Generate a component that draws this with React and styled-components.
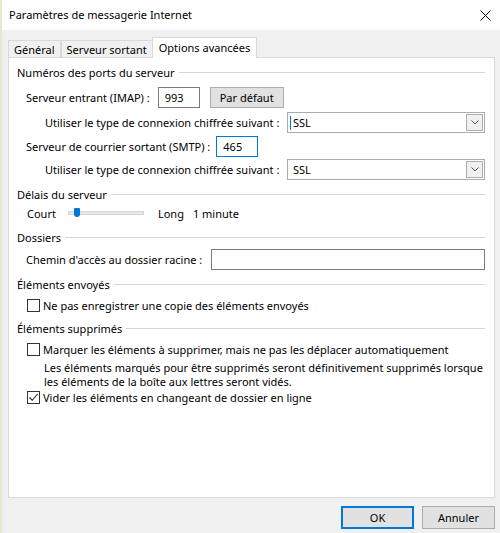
import React from 'react';
import styled, { createGlobalStyle } from 'styled-components';

const GlobalStyle = createGlobalStyle`
  html, body { margin: 0; padding: 0; background: #f0f0f0; }
  body { font-family: "Noto Sans", "Open Sans", sans-serif; font-size: 11px; color: #000; }
  * { box-sizing: border-box; }
`;

const App = () => {
  return (
    <>
      <GlobalStyle />
      <Window>
        <TitleBar>
          <Title>Paramètres de messagerie Internet</Title>
          <Close>
            <svg width="11" height="11" viewBox="0 0 11 11">
              <path d="M0.5 0.5 L10.5 10.5 M10.5 0.5 L0.5 10.5" stroke="#000" strokeWidth="1" fill="none" />
            </svg>
          </Close>
        </TitleBar>

        <Body>
          <Tabs>
            <Tab>Général</Tab>
            <Tab>Serveur sortant</Tab>
            <Tab $active>Options avancées</Tab>
          </Tabs>

          <Panel>
            <Section $mt={6}>Numéros des ports du serveur</Section>
            <Row $mt={7} $indent={9}>
              <Label>Serveur entrant (IMAP) :</Label>
              <TextBox $w={42} $ml={8}>993</TextBox>
              <Button $w={74} $ml={10}>Par défaut</Button>
            </Row>
            <Row $mt={4} $indent={28}>
              <Label>Utiliser le type de connexion chiffrée suivant :</Label>
              <Select $caret>
                <span>SSL</span>
                <Arrow>
                  <svg width="8" height="5" viewBox="0 0 8 5">
                    <path d="M0.5 0.5 L4 4 L7.5 0.5" stroke="#555" strokeWidth="1" fill="none" />
                  </svg>
                </Arrow>
              </Select>
            </Row>
            <Row $mt={3} $indent={9}>
              <Label>Serveur de courrier sortant (SMTP) :</Label>
              <TextBox $w={42} $ml={6} $focus>465</TextBox>
            </Row>
            <Row $mt={2} $indent={28}>
              <Label>Utiliser le type de connexion chiffrée suivant :</Label>
              <Select>
                <span>SSL</span>
                <Arrow>
                  <svg width="8" height="5" viewBox="0 0 8 5">
                    <path d="M0.5 0.5 L4 4 L7.5 0.5" stroke="#555" strokeWidth="1" fill="none" />
                  </svg>
                </Arrow>
              </Select>
            </Row>

            <Section $mt={6}>Délais du serveur</Section>
            <Row $mt={3} $indent={10} $h={16}>
              <Label>Court</Label>
              <Slider>
                <Track />
                <Thumb />
              </Slider>
              <Label $ml={14}>Long</Label>
              <Label $ml={9}>1 minute</Label>
            </Row>

            <Section $mt={8}>Dossiers</Section>
            <Row $mt={4} $indent={9}>
              <Label>Chemin d'accès au dossier racine :</Label>
              <TextBox $grow $ml={9} />
            </Row>

            <Section $mt={6}>Éléments envoyés</Section>
            <Row $mt={5} $indent={10} $h={16}>
              <CheckBox />
              <Label $ml={3}>Ne pas enregistrer une copie des éléments envoyés</Label>
            </Row>

            <Section $mt={7}>Éléments supprimés</Section>
            <Row $mt={5} $indent={10} $h={16}>
              <CheckBox />
              <Label $ml={3}>Marquer les éléments à supprimer, mais ne pas les déplacer automatiquement</Label>
            </Row>
            <Note>
              Les éléments marqués pour être supprimés seront définitivement supprimés lorsque
              <br />
              les éléments de la boîte aux lettres seront vidés.
            </Note>
            <Row $mt={0} $indent={10} $h={16}>
              <CheckBox>
                <svg width="11" height="11" viewBox="0 0 11 11">
                  <path d="M1.5 5.5 L4.2 8.3 L9.6 2" stroke="#222" strokeWidth="1.1" fill="none" />
                </svg>
              </CheckBox>
              <Label $ml={3}>Vider les éléments en changeant de dossier en ligne</Label>
            </Row>
          </Panel>

          <Footer>
            <Button $w={73} $h={23} $default>OK</Button>
            <Button $w={73} $h={23}>Annuler</Button>
          </Footer>
        </Body>
      </Window>
    </>
  );
};

export default App;

const Window = styled.div`
  width: 500px;
  height: 533px;
  background: #f0f0f0;
  border-left: 2px solid #e6e9cf;
  display: flex;
  flex-direction: column;
  overflow: hidden;
`;

const TitleBar = styled.div`
  height: 30px;
  background: #ffffff;
  display: flex;
  align-items: center;
  padding: 0 8px 0 7px;
`;

const Title = styled.div`
  flex: 1;
  padding-bottom: 1px;
`;

const Close = styled.div`
  width: 11px;
  height: 11px;
  margin-right: 1px;
  display: flex;
`;

const Body = styled.div`
  padding: 0 5px 0 6px;
  display: flex;
  flex-direction: column;
`;

const Tabs = styled.div`
  display: flex;
  align-items: flex-end;
  margin-top: 7px;
  height: 21px;
  position: relative;
  z-index: 1;
  margin-bottom: -1px;
`;

const Tab = styled.div`
  height: ${p => (p.$active ? '21px' : '18px')};
  padding: 0 ${p => (p.$active ? '6px' : '5px')};
  background: ${p => (p.$active ? '#ffffff' : '#f0f0f0')};
  border: 1px solid #d9d9d9;
  border-bottom: ${p => (p.$active ? 'none' : '1px solid #d9d9d9')};
  margin-left: ${p => (p.$active ? '-1px' : '0')};
  & + & { border-left: ${p => (p.$active ? '1px solid #d9d9d9' : 'none')}; }
  display: flex;
  align-items: center;
  padding-bottom: ${p => (p.$active ? '2px' : '0')};
  white-space: nowrap;
`;

const Panel = styled.div`
  height: 441px;
  background: #ffffff;
  border: 1px solid #d9d9d9;
  padding: 0 9px 0 8px;
  display: flex;
  flex-direction: column;
`;

const Section = styled.div`
  margin-top: ${p => p.$mt}px;
  height: 16px;
  display: flex;
  align-items: center;
  white-space: nowrap;
  &::after {
    content: '';
    flex: 1;
    height: 1px;
    background: #d5d5d5;
    margin-left: 4px;
  }
`;

const Row = styled.div`
  margin-top: ${p => p.$mt}px;
  padding-left: ${p => p.$indent}px;
  height: ${p => p.$h || 21}px;
  display: flex;
  align-items: center;
`;

const Label = styled.span`
  margin-left: ${p => p.$ml || 0}px;
  white-space: nowrap;
`;

const TextBox = styled.div`
  width: ${p => (p.$grow ? 'auto' : `${p.$w}px`)};
  flex: ${p => (p.$grow ? 1 : 'none')};
  margin-left: ${p => p.$ml || 0}px;
  height: 21px;
  border: 1px solid ${p => (p.$focus ? '#0078d7' : '#7a7a7a')};
  background: #fff;
  padding: 0 0 0 6px;
  display: flex;
  align-items: center;
`;

const Button = styled.div`
  width: ${p => (p.$w ? `${p.$w}px` : 'auto')};
  height: ${p => p.$h || 21}px;
  margin-left: ${p => p.$ml || 0}px;
  padding: 0 ${p => (p.$w ? 0 : 9)}px;
  background: #e1e1e1;
  border: ${p => (p.$default ? '2px solid #0078d7' : '1px solid #adadad')};
  display: flex;
  align-items: center;
  justify-content: center;
  white-space: nowrap;
`;

const Select = styled.div`
  margin-left: auto;
  width: 198px;
  height: 21px;
  border: 1px solid #acacac;
  background: #fff;
  display: flex;
  align-items: center;
  padding: 0 1px 0 5px;
  position: relative;
  span { flex: 1; }
  &::before {
    content: '';
    display: ${p => (p.$caret ? 'block' : 'none')};
    position: absolute;
    left: 2px;
    top: 3px;
    width: 1px;
    height: 14px;
    background: #0078d7;
  }
`;

const Arrow = styled.div`
  width: 17px;
  height: 17px;
  border: 1px solid #adadad;
  background: #f0f0f0;
  display: flex;
  align-items: center;
  justify-content: center;
`;

const Slider = styled.div`
  width: 76px;
  height: 16px;
  margin-left: 12px;
  position: relative;
  display: flex;
  align-items: center;
`;

const Track = styled.div`
  width: 100%;
  height: 4px;
  background: #e7e7e7;
  border: 1px solid #d6d6d6;
`;

const Thumb = styled.div`
  position: absolute;
  left: 6px;
  top: 3px;
  width: 6px;
  height: 9px;
  background: #0078d7;
  border-radius: 1px 1px 3px 3px;
`;

const CheckBox = styled.div`
  width: 13px;
  height: 13px;
  border: 1px solid #333;
  background: #fff;
  display: flex;
  align-items: center;
  justify-content: center;
`;

const Note = styled.div`
  margin-top: 4px;
  padding-left: 27px;
  line-height: 14px;
  height: 28px;
  white-space: nowrap;
`;

const Footer = styled.div`
  display: flex;
  justify-content: flex-end;
  gap: 8px;
  margin-top: 8px;
`;
